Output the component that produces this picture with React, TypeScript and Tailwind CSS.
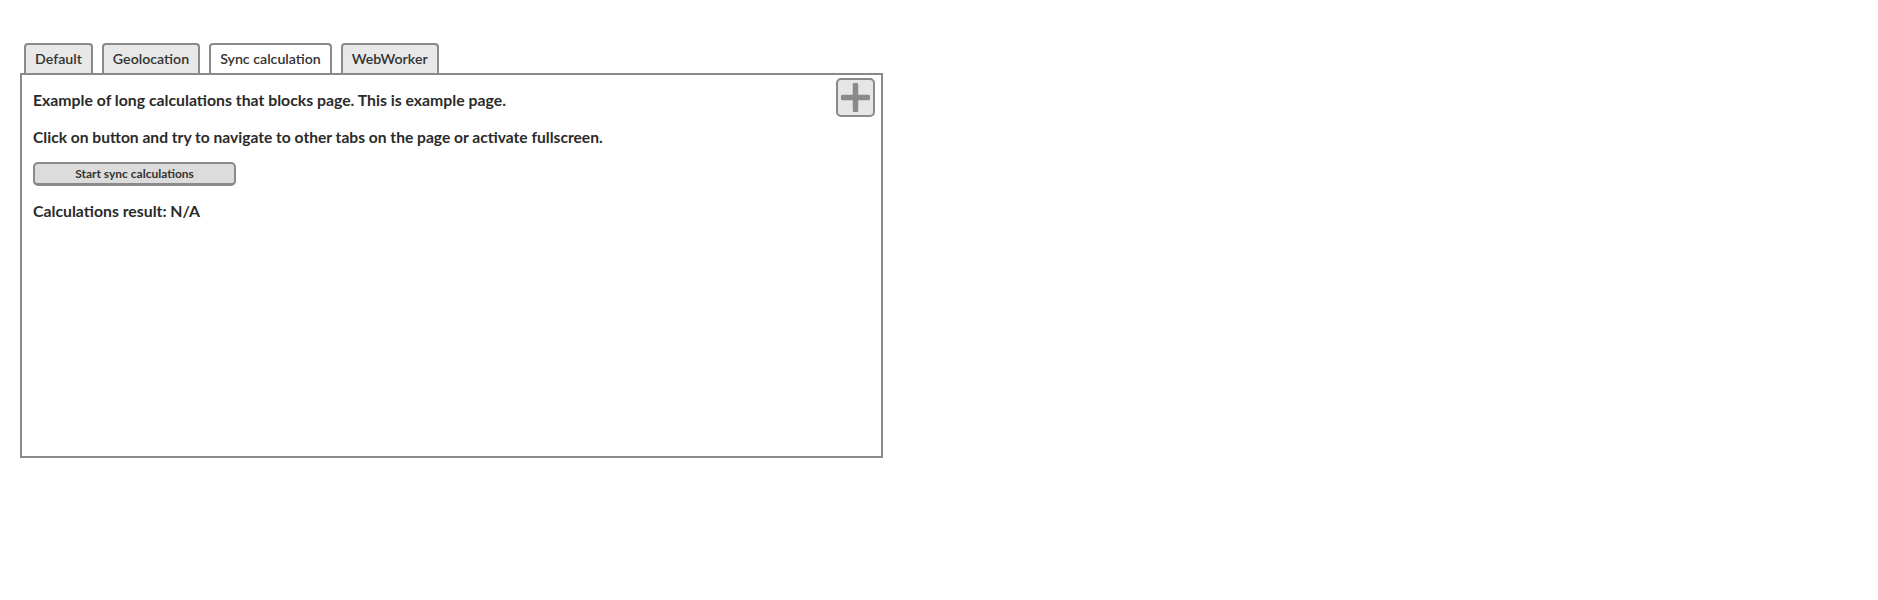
import { useState } from 'react';

const tabs = ['Default', 'Geolocation', 'Sync calculation', 'WebWorker'];

export default function App() {
  const [active, setActive] = useState('Sync calculation');
  const [result] = useState('N/A');

  return (
    <div className="min-h-[600px] bg-white pt-[43px] pl-[20px] text-[#2b2b2b]" style={{ fontFamily: 'Lato, "Open Sans", sans-serif' }}>
      <div className="w-[863px]">
        {/* Tabs */}
        <div className="flex gap-[9px] pl-[4px]">
          {tabs.map((tab) => (
            <button
              key={tab}
              onClick={() => setActive(tab)}
              className={`h-[30px] px-[9px] border-2 border-b-0 border-[#8a8a8a] rounded-t-[4px] text-[14.2px] font-semibold text-[#333] ${
                active === tab ? 'bg-white' : 'bg-[#e8e8e8]'
              }`}
            >
              {tab}
            </button>
          ))}
        </div>

        {/* Panel */}
        <div className="relative h-[385px] border-2 border-[#8a8a8a] px-[11px] pt-[15px]">
          <button className="absolute top-[3px] right-[6px] w-[39px] h-[39px] flex items-center justify-center rounded-[5px] border-2 border-[#8a8a8a] bg-[#e6e6e6]">
            <svg width="29" height="29" viewBox="0 0 29 29">
              <path d="M14.5 2 V27 M2 14.5 H27" stroke="#8a8a8a" strokeWidth="5.5" strokeLinecap="round" />
            </svg>
          </button>

          <p className="text-[15.8px] font-bold leading-[20px]">
            Example of long calculations that blocks page. This is example page.
          </p>
          <p className="mt-[17px] text-[15.6px] font-bold leading-[20px]">
            Click on button and try to navigate to other tabs on the page or activate fullscreen.
          </p>
          <button className="mt-[15px] w-[203px] h-[24px] rounded-[5px] border-2 border-b-[3px] border-[#8a8a8a] bg-[#dcdcdc] text-[12px] font-bold text-[#333] leading-none">
            Start sync calculations
          </button>
          <p className="mt-[15px] text-[15.8px] font-bold leading-[20px]">
            Calculations result: {result}
          </p>
        </div>
      </div>
    </div>
  );
}
